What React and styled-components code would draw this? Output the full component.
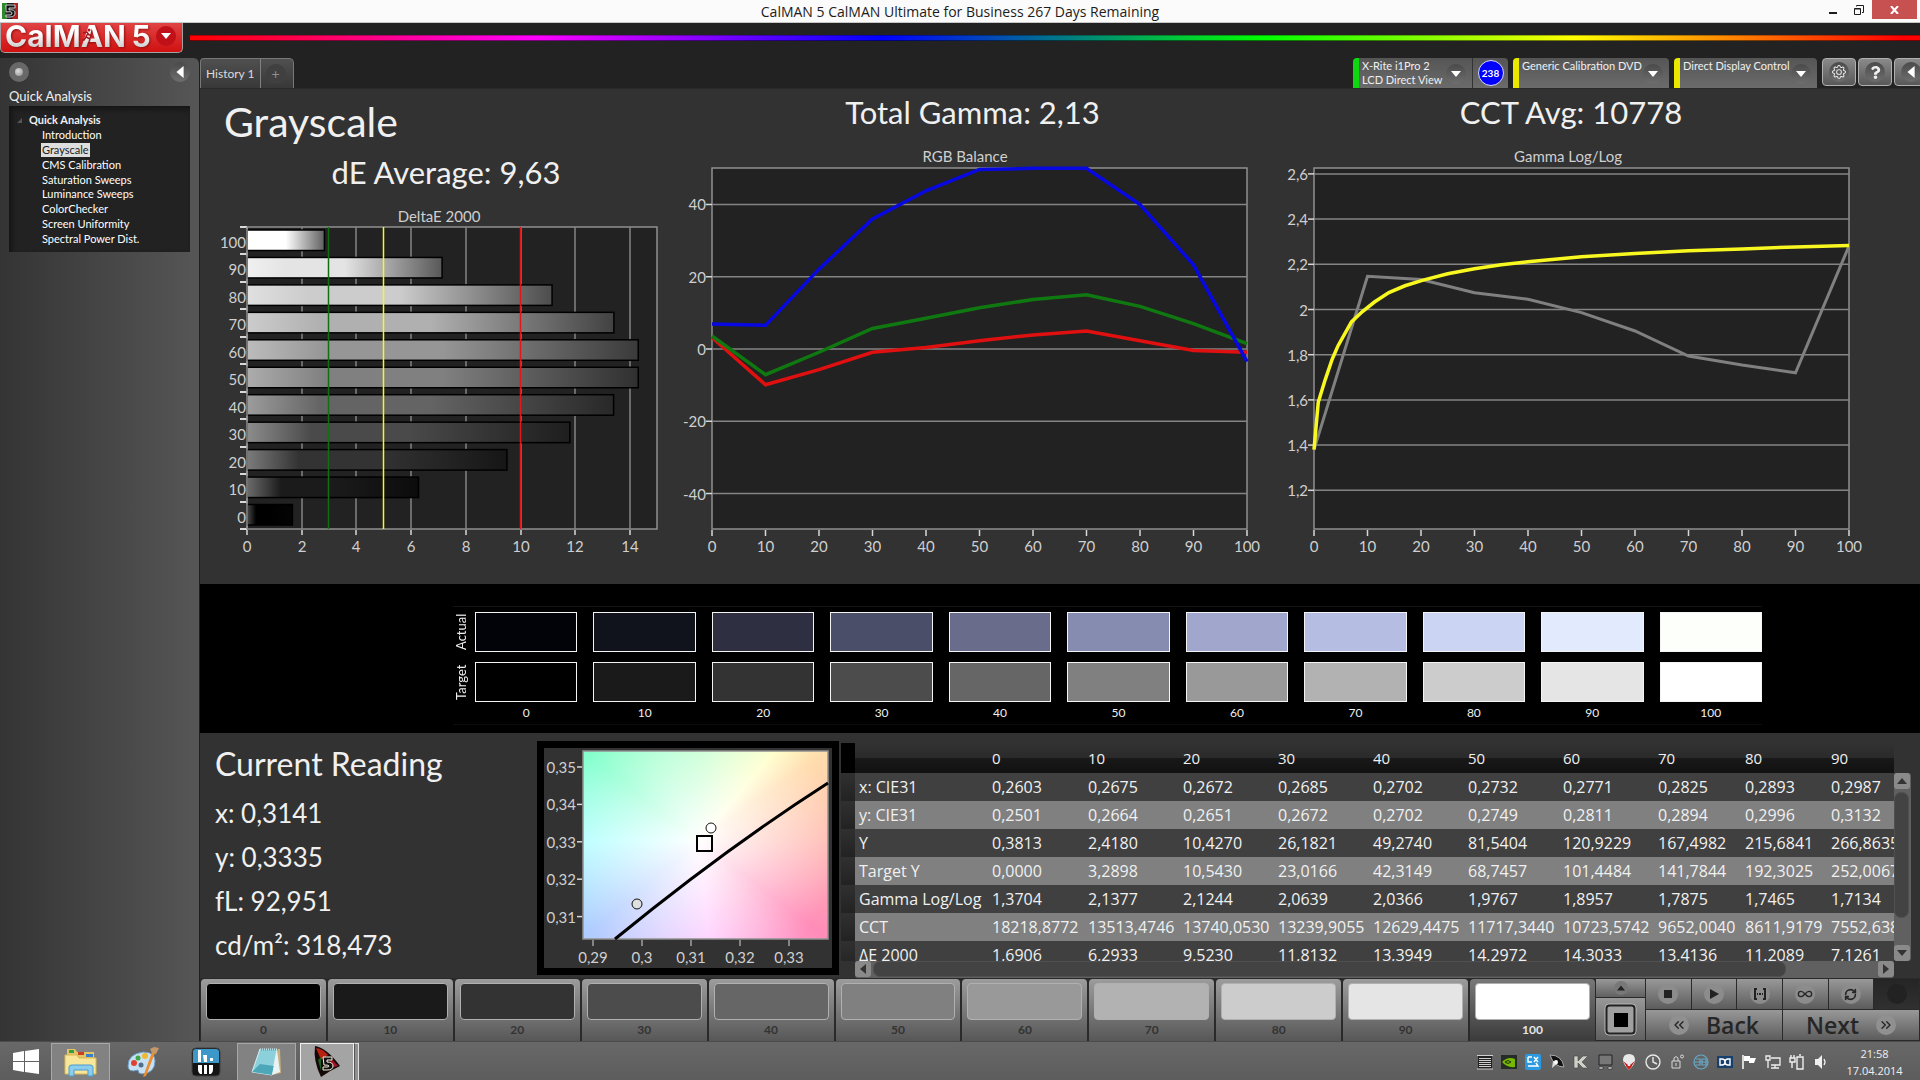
import styled, { createGlobalStyle } from "styled-components";
import { BsGear } from "react-icons/bs";
import { FaQuestion } from "react-icons/fa";
import { ChevronsLeft, ChevronsRight, Infinity as Loop, RefreshCw } from "lucide-react";

const GlobalStyle = createGlobalStyle`
  * {
    box-sizing: border-box;
  }
  body {
    margin: 0;
    background: #222222;
    color: #f0f0f0;
    font-family: Lato, "Liberation Sans", sans-serif;
    font-size: 12px;
  }
  button {
    font: inherit;
    color: inherit;
    border: 0;
    padding: 0;
    background: none;
    cursor: pointer;
  }
  h1, h2, p, ul {
    margin: 0;
    padding: 0;
    font-weight: 400;
  }
  svg {
    display: block;
    flex-shrink: 0;
  }
`;

const Page = styled.div`
  min-height: 100vh;
  display: flex;
  flex-direction: column;
  overflow: hidden;
`;

const TitleBar = styled.header`
  display: grid;
  grid-template-columns: 1fr auto 1fr;
  height: 23px;
  background: #fbfbfb;
  border-bottom: 1px solid #c8c8c8;
  color: #1c1c1c;
  font-family: "Open Sans", sans-serif;
  font-size: 14px;
  line-height: 23px;

  .icon {
    padding: 3px 2px;
  }
`;

const WindowButtons = styled.div`
  display: flex;
  justify-content: flex-end;
  padding-right: 3px;

  button {
    width: 26px;
    height: 19px;
    display: grid;
    place-items: center;
  }
  .close {
    width: 45px;
    background: #c75050;
  }
`;

const Brand = styled.div`
  display: flex;
  height: 35px;

  .rainbow {
    flex: 1;
    height: 6px;
    margin: 12px 0 0 7px;
    background: linear-gradient(
      90deg,
      #ff0000,
      #ff00ff 20%,
      #0000ff 40%,
      #00ff00 62%,
      #ffff00 80%,
      #ff0000 99%
    );
    border-top: 1px solid rgba(0, 0, 0, 0.3);
    border-bottom: 1px solid rgba(0, 0, 0, 0.5);
  }
`;

const Logo = styled.button`
  position: relative;
  display: flex;
  justify-content: space-between;
  align-items: center;
  width: 183px;
  height: 30px;
  padding: 0 6px 4px 4px;
  background: linear-gradient(#e04444, #d01010);
  border: 1px solid #a8a0a0;
  border-top: 0;
  border-radius: 0 0 5px 5px;

  b {
    font-family: Inter, sans-serif;
    font-size: 30px;
    line-height: 26px;
    font-weight: 700;
    background: linear-gradient(#ffffff 40%, #c8c8c8);
    background-clip: text;
    color: transparent;
    filter: drop-shadow(1px 1px 1px #901010);
  }
  .runner {
    position: absolute;
    left: 80px;
    top: 5px;
  }
`;

const Round = styled.span`
  display: grid;
  place-items: center;
  flex-shrink: 0;
  width: ${(props) => props.$size || 20}px;
  height: ${(props) => props.$size || 20}px;
  border-radius: 50%;
  background: ${(props) => props.$fill || "linear-gradient(#4a4a4a, #6e6e6e)"};
`;

const Body = styled.div`
  flex: 1;
  display: flex;
`;

const Sidebar = styled.aside`
  width: 200px;
  padding: 4px 9px;
  background: linear-gradient(90deg, #343434, #565656);
  border-right: 1px solid #202020;
  border-radius: 0 6px 0 0;

  .top {
    display: flex;
    justify-content: space-between;
    align-items: center;
  }
  .heading {
    font-size: 13px;
    line-height: 20px;
    margin-top: 4px;
  }
`;

const Tree = styled.nav`
  height: 146px;
  padding: 6px 0 6px 20px;
  background: #222222;
  box-shadow: inset 3px 3px 5px #151515;
  position: relative;
  font-size: 11px;

  .arrow {
    position: absolute;
    left: 8px;
    top: 12px;
  }
  b {
    display: block;
    line-height: 16px;
  }
  ul {
    list-style: none;
    height: 118px;
    padding-left: 12px;
    display: flex;
    flex-direction: column;
    justify-content: space-between;
    line-height: 14px;
  }
`;

const TreeLink = styled.a`
  display: inline-block;
  padding: 0 1px;
  text-decoration: none;
  color: ${(props) => (props.$active ? "#222222" : "#ffffff")};
  background: ${(props) => (props.$active ? "#dedede" : "none")};
`;

const Main = styled.main`
  flex: 1;
  min-width: 0;
  display: flex;
  flex-direction: column;
`;

const TabBar = styled.div`
  display: flex;
  justify-content: space-between;
  height: 30px;
`;

const Tabs = styled.div`
  display: flex;
  background: linear-gradient(#505050, #383838);
  border: 1px solid #787878;
  border-bottom: 0;
  border-radius: 4px 5px 0 0;

  button {
    padding: 0 5px;
    color: #dcdcdc;
  }
  button + button {
    width: 33px;
    padding: 0 5px;
    border-left: 1px solid #808080;
    font-size: 14px;
    color: #909090;
  }
`;

const Devices = styled.div`
  display: flex;
  margin-right: -10px;
`;

const Device = styled.div`
  display: flex;
  width: ${(props) => props.$width}px;
  margin-right: 5px;
  background: linear-gradient(#555555, #6b6b6b);
  border-left: 6px solid ${(props) => props.$mark};
  border-radius: 4px 4px 0 0;

  .pick {
    flex: 1;
    display: flex;
    justify-content: space-between;
    padding: 1px 6px 0 3px;
    text-align: left;
    font-size: 11px;
    line-height: 14px;
    white-space: nowrap;
  }
  .pick span:last-child {
    margin-top: 5px;
  }
  .count {
    width: 36px;
    display: grid;
    place-items: center;
    border-left: 1px solid #333333;
  }
  .count span {
    border: 1px solid #d8d8ff;
    font-size: 10px;
    font-weight: 700;
    color: #ffffff;
  }
`;

const SquareButton = styled.button`
  width: 34px;
  height: 28px;
  margin-right: 2px;
  display: grid;
  place-items: center;
  background: linear-gradient(#8a8a8a, #585858);
  border: 1px solid #b0b0b0;
  border-radius: 4px;
`;

const Charts = styled.section`
  display: grid;
  grid-template-columns: 448fr 589fr 592fr;
  column-gap: 8px;
  padding: 3px 60px 19px 15px;
  background: #323232;
  border-top: 1px solid #2a2a2a;

  h1 {
    font-size: 41px;
    line-height: 60px;
    padding-left: 9px;
  }
  h2 {
    font-size: 31px;
    line-height: 40px;
    padding: 0 0 4px 14px;
    text-align: center;
  }
  svg {
    width: 100%;
    overflow: visible;
  }
`;

const AxisText = styled.text`
  fill: #cfcfcf;
  font-size: 15px;
  text-anchor: ${(props) => props.$anchor || "middle"};
`;

const Swatches = styled.section`
  padding: 22px 158px 8px 253px;
  background: #000000;

  .rows {
    display: grid;
    grid-template-columns: 6px repeat(11, 1fr);
    column-gap: 16px;
    row-gap: 10px;
    padding-top: 5px;
    border-top: 1px solid #141414;
    border-bottom: 1px solid #0c0c0c;
  }
  .side {
    writing-mode: vertical-rl;
    transform: rotate(180deg);
    width: 16px;
    text-align: center;
    font-size: 13px;
    line-height: 16px;
  }
  .level {
    margin-top: -8px;
    text-align: center;
    line-height: 18px;
    padding-bottom: 2px;
  }
`;

const Chip = styled.div`
  height: 40px;
  border: 1px solid #f4f4f4;
  background: ${(props) => props.$color};
`;

const Bottom = styled.section`
  flex: 1;
  display: flex;
  background: #323232;
  padding-top: 8px;
`;

const Reading = styled.div`
  width: 337px;
  padding-left: 15px;

  h2 {
    font-size: 32px;
    line-height: 46px;
    padding-bottom: 4px;
  }
  p {
    font-size: 26px;
    line-height: 44px;
  }
`;

const Cie = styled.div`
  width: 302px;
  height: 234px;
  border: 7px solid #000000;
`;

const CieField = styled.div`
  width: 245px;
  height: 188px;
  background: radial-gradient(
      circle at 116px 90px,
      #ffffff,
      rgba(255, 255, 255, 0) 140px
    ),
    conic-gradient(
      from 0deg at 116px 90px,
      #b4ffc4 0deg,
      #ffffc4 40deg,
      #ffdcac 55deg,
      #ffbcb4 90deg,
      #ff8cb8 127deg,
      #ffc4ff 174deg,
      #b0ccff 230deg,
      #b0ffff 270deg,
      #84ffcc 308deg,
      #b4ffc4 360deg
    );
`;

const Grid = styled.div`
  flex: 1;
  min-width: 0;
  display: grid;
  grid-template-columns: minmax(0, 1fr) 17px;
  grid-template-rows: 218px 17px;
  margin: 2px 9px 0 2px;
`;

const Clip = styled.div`
  overflow: hidden;
`;

const Table = styled.table`
  table-layout: fixed;
  width: 1100px;
  border-collapse: collapse;
  font-family: "Open Sans", sans-serif;
  font-size: 16px;
  white-space: nowrap;

  th, td {
    height: 28px;
    padding: 0 4px;
    font-weight: 400;
    text-align: left;
    line-height: 24px;
  }
  thead th {
    height: 30px;
    font-size: 15px;
    background: linear-gradient(#323232, #2a2a2a 50%, #191919 50%, #111111);
  }
  thead th:first-child {
    background: #000000;
  }
  tbody tr {
    background: #404040;
  }
  tbody tr:nth-child(even) {
    background: #808080;
  }
  tbody .gutter {
    background: linear-gradient(#303030, #222222);
  }
`;

const ScrollBar = styled.div`
  display: flex;
  flex-direction: ${(props) => (props.$vertical ? "column" : "row")};
  justify-content: space-between;
  margin: ${(props) => (props.$vertical ? "30px 0 0" : "0 0 0 14px")};
  background: #606060;
  border-radius: 3px;

  button {
    width: 16px;
    height: 16px;
    display: grid;
    place-items: center;
    background: #8a8a8a;
    border-radius: 3px;
  }
  .track {
    flex: 1;
    margin: ${(props) => (props.$vertical ? "3px 0" : "0 2px")};
  }
  .thumb {
    width: ${(props) => (props.$vertical ? "15px" : "91%")};
    height: ${(props) => (props.$vertical ? "84%" : "16px")};
    background: #434343;
    border: 1px solid #505050;
    border-radius: 7px;
  }
`;

const Controls = styled.section`
  display: flex;
  gap: 1px;
  height: 63px;
  padding: 1px;
  background: #2a2a2a;
`;

const Patches = styled.div`
  flex: 1;
  display: grid;
  grid-template-columns: repeat(11, 1fr);
  gap: 2px;
`;

const Patch = styled.button`
  padding: 4px 5px;
  border-radius: 4px;
  background: ${(props) =>
    props.$active
      ? "linear-gradient(#787878, #383838)"
      : "linear-gradient(#9c9c9c, #545454)"};
  color: ${(props) => (props.$active ? "#e4e4e4" : "#333333")};
  font-weight: 700;

  i {
    display: block;
    height: 37px;
    border: 1px solid #b0b0b0;
    border-radius: 4px;
    background: ${(props) => props.$color};
  }
  span {
    display: block;
    line-height: 20px;
  }
`;

const Stack = styled.div`
  display: grid;
  grid-template-rows: 18px 1fr;
  row-gap: 1px;
  width: 49px;

  button {
    display: grid;
    place-items: center;
    background: linear-gradient(#989898, #606060);
  }
`;

const Transport = styled.div`
  width: 273px;
  display: grid;
  grid-template-rows: 30px 1fr;
  gap: 1px;
  color: #262626;

  .icons {
    display: grid;
    grid-template-columns: repeat(6, 1fr);
    gap: 1px;
  }
  .steps {
    display: grid;
    grid-template-columns: 1fr 1fr;
    gap: 1px;
  }
  button {
    display: flex;
    align-items: center;
    justify-content: center;
    gap: 17px;
    background: linear-gradient(#989898, #5c5c5c);
  }
  .steps button {
    font-family: "Open Sans", sans-serif;
    font-size: 23px;
    font-weight: 600;
    line-height: 28px;
  }
  .icons button:last-child {
    background: linear-gradient(#252525, #303030);
  }
`;

const TaskBar = styled.footer`
  display: flex;
  align-items: center;
  height: 40px;
  background: linear-gradient(#686868, #5c5c5c);
  border-top: 1px solid #4c4c4c;
`;

const TaskButton = styled.button`
  width: ${(props) => props.$width}px;
  height: 38px;
  display: grid;
  place-items: center;
  border: ${(props) => (props.$open ? "1px solid #a8a8a8" : "0")};
  background: ${(props) => (props.$open ? "#828282" : "none")};
  ${(props) =>
    props.$active &&
    "background: #a4a4a4; border: 1px solid #f0f0f0; margin-left: 4px;"}
`;

const Sliver = styled.div`
  width: 5px;
  height: 38px;
  background: #909090;
  border: 1px solid #e0e0e0;
  border-left-color: #555555;
`;

const Tray = styled.div`
  display: flex;
  gap: 8px;
  margin-left: auto;
`;

const Clock = styled.div`
  width: 91px;
  font-family: "Open Sans", sans-serif;
  font-size: 11px;
  line-height: 17px;
  text-align: center;
`;

const levels = [0, 10, 20, 30, 40, 50, 60, 70, 80, 90, 100];

const pages = [
  "Introduction",
  "Grayscale",
  "CMS Calibration",
  "Saturation Sweeps",
  "Luminance Sweeps",
  "ColorChecker",
  "Screen Uniformity",
  "Spectral Power Dist.",
];

const bars = [
  { level: 100, value: 2.83, from: "#ffffff", mid: "#ffffff", to: "#606060" },
  { level: 90, value: 7.13, from: "#f0f0f0", mid: "#e4e4e4", to: "#585858" },
  { level: 80, value: 11.15, from: "#e0e0e0", mid: "#cccccc", to: "#4c4c4c" },
  { level: 70, value: 13.41, from: "#cccccc", mid: "#b0b0b0", to: "#424242" },
  { level: 60, value: 14.3, from: "#bcbcbc", mid: "#969696", to: "#3a3a3a" },
  { level: 50, value: 14.3, from: "#acacac", mid: "#808080", to: "#303030" },
  { level: 40, value: 13.4, from: "#9c9c9c", mid: "#646464", to: "#282828" },
  { level: 30, value: 11.8, from: "#8c8c8c", mid: "#4a4a4a", to: "#1e1e1e" },
  { level: 20, value: 9.5, from: "#7c7c7c", mid: "#333333", to: "#161616" },
  { level: 10, value: 6.27, from: "#6c6c6c", mid: "#1b1b1b", to: "#0c0c0c" },
  { level: 0, value: 1.66, from: "#4c4c4c", mid: "#000000", to: "#040404" },
];

const balance = [
  { color: "#e01010", values: [3.2, -9.9, -5.7, -0.9, 0.4, 2.3, 3.9, 5, 2.3, -0.4, -0.9] },
  { color: "#107810", values: [3.6, -7.1, -0.9, 5.7, 8.5, 11.4, 13.7, 15, 11.8, 7, 1.5] },
  { color: "#0808e0", values: [6.9, 6.55, 22.1, 36, 43.8, 49.7, 50, 50, 40, 23.3, -3.5] },
];

const gamma = [1.38, 2.147, 2.133, 2.074, 2.045, 1.986, 1.905, 1.794, 1.754, 1.72, 2.281];

const targetGamma = [
  [0, 1.38], [0.8, 1.59], [2.1, 1.69], [3.4, 1.78], [4.5, 1.84], [7, 1.945],
  [9, 1.99], [11.3, 2.033], [14, 2.075], [17, 2.105], [20.4, 2.13], [25, 2.158],
  [30, 2.18], [35, 2.198], [40, 2.211], [50, 2.233], [60, 2.248], [70, 2.26],
  [80, 2.268], [90, 2.277], [100, 2.283],
];

const swatches = [
  { name: "Actual", colors: ["#020308", "#10131c", "#2e3042", "#4b4e68", "#6a6c8c", "#868caf", "#a0a6cc", "#b6bde2", "#ccd4f4", "#e2eafd", "#fdfffa"] },
  { name: "Target", colors: ["#000000", "#1a1a1a", "#333333", "#4c4c4c", "#666666", "#808080", "#999999", "#b2b2b2", "#cccccc", "#e5e5e5", "#ffffff"] },
];

const results = [
  ["x: CIE31", "0,2603", "0,2675", "0,2672", "0,2685", "0,2702", "0,2732", "0,2771", "0,2825", "0,2893", "0,2987"],
  ["y: CIE31", "0,2501", "0,2664", "0,2651", "0,2672", "0,2702", "0,2749", "0,2811", "0,2894", "0,2996", "0,3132"],
  ["Y", "0,3813", "2,4180", "10,4270", "26,1821", "49,2740", "81,5404", "120,9229", "167,4982", "215,6841", "266,8635"],
  ["Target Y", "0,0000", "3,2898", "10,5430", "23,0166", "42,3149", "68,7457", "101,4484", "141,7844", "192,3025", "252,0067"],
  ["Gamma Log/Log", "1,3704", "2,1377", "2,1244", "2,0639", "2,0366", "1,9767", "1,8957", "1,7875", "1,7465", "1,7134"],
  ["CCT", "18218,8772", "13513,4746", "13740,0530", "13239,9055", "12629,4475", "11717,3440", "10723,5742", "9652,0040", "8611,9179", "7552,6385"],
  ["ΔE 2000", "1,6906", "6,2933", "9,5230", "11,8132", "13,3949", "14,2972", "14,3033", "13,4136", "11,2089", "7,1261"],
];

const columnWidths = [14, 133, 96, 95, 95, 95, 95, 95, 95, 87, 86, 114];

const Caret = ({ dir = "down", size = 8, color = "#ffffff" }) => {
  const turn = { down: 0, left: 90, up: 180, right: 270 }[dir];
  return (
    <svg width={size} height={size} viewBox="0 0 10 10">
      <path d="M0 2h10L5 8z" fill={color} transform={`rotate(${turn} 5 5)`} />
    </svg>
  );
};

const DeltaEChart = () => (
  <svg viewBox="0 0 448 369" role="img" aria-label="DeltaE 2000">
    <defs>
      {bars.map((bar) => (
        <linearGradient id={`bar${bar.level}`} key={bar.level}>
          <stop offset="0" stopColor={bar.from} />
          <stop offset="0.2" stopColor={bar.mid} />
          <stop offset="0.5" stopColor={bar.mid} />
          <stop offset="1" stopColor={bar.to} />
        </linearGradient>
      ))}
    </defs>
    <AxisText x="224" y="26">DeltaE 2000</AxisText>
    <rect x="32" y="31" width="410" height="302" fill="#222222" stroke="#909090" strokeWidth="1.5" />
    {[0, 2, 4, 6, 8, 10, 12, 14].map((v) => {
      const x = Math.round(32 + v * 27.36);
      return (
        <g key={v}>
          <path d={`M${x} 31V333`} stroke="#848484" strokeWidth="1.5" />
          <path d={`M${x} 334V339`} stroke="#d8d8d8" strokeWidth="1.5" />
          <AxisText x={x} y="356">{v}</AxisText>
        </g>
      );
    })}
    {bars.map((bar, idx) => {
      const y = 31 + idx * 27.45;
      return (
        <g key={bar.level}>
          <path d={`M25 ${Math.round(y)}H32`} stroke="#d8d8d8" strokeWidth="2" />
          <rect
            x="32"
            y={y + 3}
            width={bar.value * 27.36}
            height="20.5"
            fill={`url(#bar${bar.level})`}
            stroke="#000000"
            strokeWidth="1.5"
          />
          <AxisText x="31" y={y + 21} $anchor="end">{bar.level}</AxisText>
        </g>
      );
    })}
    <path d="M25 333H32" stroke="#d8d8d8" strokeWidth="2" />
    <path d="M32 31V333" stroke="#909090" strokeWidth="1.5" />
    <path d="M113.5 31V333" stroke="#107010" strokeWidth="1.5" />
    <path d="M168.5 31V333" stroke="#f8f820" strokeWidth="1.5" />
    <path d="M305.5 31V333" stroke="#e01818" strokeWidth="1.5" />
  </svg>
);

const LineChart = ({ width, left, title, titleX, ticks, scaleY, format, children }) => (
  <svg viewBox={`0 0 ${width} 429`} role="img" aria-label={title}>
    <AxisText x={titleX} y="26">{title}</AxisText>
    <rect x={left} y="32" width="535" height="361" fill="#222222" stroke="#909090" strokeWidth="1.5" />
    {ticks.map((v) => (
      <g key={v}>
        <path d={`M${left} ${scaleY(v)}H${left + 535}`} stroke="#848484" strokeWidth="1.5" />
        <path d={`M${left - 6} ${scaleY(v)}H${left}`} stroke="#d8d8d8" strokeWidth="1.5" />
        <AxisText x={left - 6} y={scaleY(v) + 6} $anchor="end">{format(v)}</AxisText>
      </g>
    ))}
    {levels.map((v) => (
      <g key={v}>
        <path d={`M${left + v * 5.35} 394V400`} stroke="#d8d8d8" strokeWidth="1.5" />
        <AxisText x={left + v * 5.35} y="416">{v}</AxisText>
      </g>
    ))}
    {children}
  </svg>
);

const balanceY = (v) => 213 - v * 3.613;
const gammaY = (v) => 173.5 - (v - 2) * 226;
const line = (points, left, scaleY) =>
  points.map(([x, y]) => `${left + x * 5.35},${scaleY(y)}`).join(" ");
const byLevel = (values) => values.map((v, idx) => [idx * 10, v]);

const CieChart = () => (
  <svg width="100%" height="220" viewBox="0 0 288 220" role="img" aria-label="CIE chart">
    <foreignObject x="39" y="3" width="245" height="188">
      <CieField />
    </foreignObject>
    <rect x="39" y="3" width="245" height="188" fill="none" stroke="#909090" strokeWidth="1.5" />
    {["0,35", "0,34", "0,33", "0,32", "0,31"].map((label, idx) => (
      <g key={label}>
        <path d={`M33 ${19 + idx * 37.4}H38`} stroke="#d8d8d8" strokeWidth="1.5" />
        <AxisText x="32" y={25 + idx * 37.4} $anchor="end">{label}</AxisText>
      </g>
    ))}
    {["0,29", "0,3", "0,31", "0,32", "0,33"].map((label, idx) => (
      <g key={label}>
        <path d={`M${49 + idx * 49} 192V198`} stroke="#d8d8d8" />
        <AxisText x={49 + idx * 49} y="215">{label}</AxisText>
      </g>
    ))}
    <path d="M71 191Q181 101 284 35" fill="none" stroke="#000000" strokeWidth="3" />
    <rect x="153" y="88" width="15" height="15" fill="none" stroke="#000000" strokeWidth="2" />
    <circle cx="167" cy="80" r="5" fill="#ffffff" stroke="#111111" />
    <circle cx="93" cy="156" r="5" fill="#e0e0e0" stroke="#111111" />
  </svg>
);

const AppGlyph = ({ size }) => (
  <svg width={size} height={size} viewBox="0 0 16 16">
    <rect width="16" height="16" fill="#222222" />
    <path d="M0 0h5L3 8l2 8H0z" fill="#2c8a2c" />
    <path d="M12 0h4v16h-6l3-7z" fill="#b02020" />
    <path d="M4 2h9v3H7v2q6-1 6 3t-5 4H4v-2h4q2 0 2-2T4 9z" fill="#111111" stroke="#f4f4f4" strokeWidth=".8" />
  </svg>
);

const trayIcons = [
  <g key="0"><path d="M1 1h14v14H1z" fill="#222222" /><path d="M0 1.5h16M2 4.5h12M2 6.5h12M2 8.5h12M2 10.5h12M2 12.500h12M0 15h16" stroke="#d0d0d0" /></g>,
  <g key="1"><path d="M0 1h16v14H0z" fill="#252b25" /><path d="M1 8q6-6 13-3v8q-8 1-13-5z" fill="#76b900" /><path d="M4 8q3-3 6 0-3 3-6 0z" fill="none" stroke="#203000" /></g>,
  <g key="2"><rect width="16" height="16" rx="2" fill="#2c9ae0" /><path d="M3 3h4M3 3v5h4M9 3l4 5M13 3l-4 5M3 12h10l-2-3" fill="none" stroke="#ffffff" strokeWidth="1.4" /></g>,
  <g key="3"><path d="M1 1q12 0 14 12-10 0-14-12z" fill="#111111" stroke="#aaaaaa" /><path d="M4 7l-1 7 6-5z" fill="#dddddd" /><circle cx="7" cy="8" r="2" fill="#ffffff" /></g>,
  <g key="4"><path d="M1 2h4v5l5-5h5L9 8l6 6h-5L5 9v5H1z" fill="#d0d0c8" stroke="#444444" strokeWidth=".6" /></g>,
  <g key="5"><path d="M2 1h13v10H2z" fill="#777777" stroke="#222222" /><path d="M2 13h4v2H2zM11 13h4v2h-4z" fill="#e0e0e0" stroke="#222222" strokeWidth=".6" /></g>,
  <g key="6"><path d="M2 6q0-6 6-6t6 6q0 4-6 10-6-6-6-10z" fill="#e8e8e8" /><path d="M2 7l5 4-1 2zM14 7l-5 4 1 2z" fill="#c01010" /><path d="M5 12h6l-3 4z" fill="#d02020" /></g>,
  <g key="7" fill="none" stroke="#e8e8e8" strokeWidth="1.4"><circle cx="8" cy="8" r="7" /><path d="M8 3v5l4 2" /></g>,
  <g key="8" fill="none" stroke="#d8d8d8"><path d="M3 7h8v7H3zM5 7V4q2-3 4 0v3M7 9v3" /><circle cx="13" cy="2.500" r="1.500" /></g>,
  <g key="9" fill="none" stroke="#68a8c8" strokeWidth="1.2"><circle cx="8" cy="8" r="7" /><path d="M3 5h4v6H3M9 5h4v6H9zM1 8h14" /></g>,
  <g key="10"><path d="M0 2h16v12H0z" fill="#18406c" /><path d="M3 5h2q3 0 3 3t-3 3H3zM13 5h-2q-3 0-3 3t3 3h2z" fill="none" stroke="#ffffff" strokeWidth="1.4" /></g>,
  <g key="11"><path d="M2 1v14" stroke="#ffffff" strokeWidth="1.5" /><path d="M3 2h6v2h6l-2 5H8V7H3z" fill="#ffffff" /></g>,
  <g key="12" fill="none" stroke="#f0f0f0" strokeWidth="1.3"><path d="M6 4h9v7H6M10 11v3M6 14h8M1 2h4v4H1zM3 6v8" /></g>,
  <g key="13" fill="none" stroke="#f0f0f0" strokeWidth="1.4"><path d="M8 3h6v12H8zM10 1h2M1 4h5v4H1zM2 1v3M5 1v3M3 8v6" /></g>,
  <g key="14"><path d="M2 5h3l4-4v14l-4-4H2z" fill="#f0f0f0" /><path d="M11 5q2 3 0 6" fill="none" stroke="#f0f0f0" strokeWidth="1.3" /></g>,
];

const App = () => (
  <>
    <GlobalStyle />
    <Page>
      <TitleBar>
        <span className="icon"><AppGlyph size={16} /></span>
        <span>CalMAN 5 CalMAN Ultimate for Business 267 Days Remaining</span>
        <WindowButtons>
          <button aria-label="Minimize">
            <svg width="10" height="10"><path d="M1 7h8v2H1z" fill="#1c1c1c" /></svg>
          </button>
          <button aria-label="Restore">
            <svg width="10" height="10" fill="none" stroke="#1c1c1c">
              <path d="M.5 3.500h6v6h-6zM2.500 1.500V.5h7v7H8" />
              <path d="M.5 4h6" />
            </svg>
          </button>
          <button className="close" aria-label="Close">
            <svg width="9" height="8"><path d="M1 0l7 8M8 0L1 8" stroke="#ffffff" strokeWidth="2" /></svg>
          </button>
        </WindowButtons>
      </TitleBar>
      <Brand>
        <Logo>
          <b>CalMAN</b>
          <b>5</b>
          <Round $fill="#c01018"><Caret size={10} /></Round>
          <svg className="runner" width="12" height="15" fill="none" stroke="#a81820" strokeWidth="1.5">
            <circle cx="8" cy="2" r="1.500" fill="#a81820" stroke="none" />
            <path d="M2 5l4-1 2 3 3 0M7 5L5 9l4 2-1 3M5 9l-2 3H1" />
          </svg>
        </Logo>
        <div className="rainbow" />
      </Brand>
      <Body>
        <Sidebar>
          <div className="top">
            <button aria-label="Record">
              <Round $fill="#686868">
                <Round $size={8} $fill="radial-gradient(circle at 3px 3px, #dddddd, #888888)" />
              </Round>
            </button>
            <button aria-label="Collapse"><Round><Caret dir="left" size={12} /></Round></button>
          </div>
          <p className="heading">Quick Analysis</p>
          <Tree>
            <svg className="arrow" width="6" height="6"><path d="M5 0v5H0z" fill="#555555" /></svg>
            <b>Quick Analysis</b>
            <ul>
              {pages.map((page) => (
                <li key={page}>
                  <TreeLink href="#" $active={page === "Grayscale"}>{page}</TreeLink>
                </li>
              ))}
            </ul>
          </Tree>
        </Sidebar>
        <Main>
          <TabBar>
            <Tabs>
              <button>History 1</button>
              <button aria-label="Add history"><Round $fill="#404040">+</Round></button>
            </Tabs>
            <Devices>
              <Device $width={155} $mark="#10d810">
                <button className="pick">
                  <span>X-Rite i1Pro 2<br />LCD Direct View</span>
                  <Round><Caret size={10} /></Round>
                </button>
                <div className="count"><Round $size={26} $fill="#0000ff">238</Round></div>
              </Device>
              <Device $width={156} $mark="#e8e800">
                <button className="pick">
                  <span>Generic Calibration DVD</span>
                  <Round><Caret size={10} /></Round>
                </button>
              </Device>
              <Device $width={143} $mark="#e8e800">
                <button className="pick">
                  <span>Direct Display Control</span>
                  <Round><Caret size={10} /></Round>
                </button>
              </Device>
              <SquareButton aria-label="Settings"><Round><BsGear size={14} /></Round></SquareButton>
              <SquareButton aria-label="Help"><Round><FaQuestion size={13} /></Round></SquareButton>
              <SquareButton aria-label="Collapse"><Round><Caret dir="left" size={12} /></Round></SquareButton>
            </Devices>
          </TabBar>
          <Charts>
            <div>
              <h1>Grayscale</h1>
              <h2>dE Average: 9,63</h2>
              <DeltaEChart />
            </div>
            <div>
              <h2>Total Gamma: 2,13</h2>
              <LineChart
                width={589}
                left={41}
                title="RGB Balance"
                titleX={294}
                ticks={[40, 20, 0, -20, -40]}
                scaleY={balanceY}
                format={(v) => v}
              >
                {balance.map((item) => (
                  <polyline
                    key={item.color}
                    points={line(byLevel(item.values), 41, balanceY)}
                    fill="none"
                    stroke={item.color}
                    strokeWidth="3.5"
                  />
                ))}
              </LineChart>
            </div>
            <div>
              <h2>CCT Avg: 10778</h2>
              <LineChart
                width={592}
                left={46}
                title="Gamma Log/Log"
                titleX={300}
                ticks={[2.6, 2.4, 2.2, 2, 1.8, 1.6, 1.4, 1.2]}
                scaleY={gammaY}
                format={(v) => String(v).replace(".", ",")}
              >
                <polyline
                  points={line(byLevel(gamma), 46, gammaY)}
                  fill="none"
                  stroke="#808080"
                  strokeWidth="3"
                />
                <polyline
                  points={line(targetGamma, 46, gammaY)}
                  fill="none"
                  stroke="#f8f820"
                  strokeWidth="3.5"
                />
              </LineChart>
            </div>
          </Charts>
          <Swatches>
            <div className="rows">
              {swatches.map((row) => [
                <span className="side" key={row.name}>{row.name}</span>,
                ...row.colors.map((color) => <Chip key={color} $color={color} />),
              ])}
              <span />
              {levels.map((level) => (
                <span className="level" key={level}>{level}</span>
              ))}
            </div>
          </Swatches>
          <Bottom>
            <Reading>
              <h2>Current Reading</h2>
              <p>x: 0,3141</p>
              <p>y: 0,3335</p>
              <p>fL: 92,951</p>
              <p>cd/m²: 318,473</p>
            </Reading>
            <Cie><CieChart /></Cie>
            <Grid>
              <Clip>
                <Table>
                  <colgroup>
                    {columnWidths.map((width, idx) => (
                      <col key={idx} width={width} />
                    ))}
                  </colgroup>
                  <thead>
                    <tr>
                      <th />
                      <th />
                      {levels.slice(0, 10).map((level) => (
                        <th key={level} scope="col">{level}</th>
                      ))}
                    </tr>
                  </thead>
                  <tbody>
                    {results.map(([name, ...values]) => (
                      <tr key={name}>
                        <td className="gutter" />
                        <th scope="row">{name}</th>
                        {values.map((value, idx) => (
                          <td key={idx}>{value}</td>
                        ))}
                      </tr>
                    ))}
                  </tbody>
                </Table>
              </Clip>
              <ScrollBar $vertical>
                <button aria-label="Scroll up"><Caret dir="up" size={10} color="#333333" /></button>
                <div className="track"><div className="thumb" /></div>
                <button aria-label="Scroll down"><Caret size={10} color="#333333" /></button>
              </ScrollBar>
              <ScrollBar>
                <button aria-label="Scroll left"><Caret dir="left" size={10} color="#333333" /></button>
                <div className="track"><div className="thumb" /></div>
                <button aria-label="Scroll right"><Caret dir="right" size={10} color="#333333" /></button>
              </ScrollBar>
            </Grid>
          </Bottom>
          <Controls>
            <Patches>
              {levels.map((level, idx) => (
                <Patch key={level} $color={swatches[1].colors[idx]} $active={level === 100}>
                  <i />
                  <span>{level}</span>
                </Patch>
              ))}
            </Patches>
            <Stack>
              <button aria-label="Expand"><Round $size={14} $fill="#787878"><Caret dir="up" color="#222222" /></Round></button>
              <button aria-label="Pattern window">
                <svg width="33" height="33">
                  <rect x="1" y="1" width="31" height="31" rx="4" fill="#a0a0a0" stroke="#b8b8b8" />
                  <rect x="2.500" y="2.500" width="28" height="28" rx="3" fill="#a0a0a0" stroke="#222222" strokeWidth="2" />
                  <path d="M10 10h14v14H10z" fill="#000000" />
                </svg>
              </button>
            </Stack>
            <Transport>
              <div className="icons">
                <button aria-label="Stop">
                  <Round $fill="#8c8c8c"><svg width="8" height="8"><path d="M0 0h8v8H0z" fill="#222222" /></svg></Round>
                </button>
                <button aria-label="Play">
                  <Round $fill="#8c8c8c"><svg width="10" height="10"><path d="M1 0l9 5-9 5z" fill="#222222" /></svg></Round>
                </button>
                <button aria-label="Read series">
                  <Round $fill="#8c8c8c">
                    <svg width="14" height="12" fill="none" stroke="#222222" strokeWidth="2">
                      <path d="M4 1H2v10h2M10 1h2v10h-2M4 6h1M6 6h2M9 6h1" />
                    </svg>
                  </Round>
                </button>
                <button aria-label="Continuous"><Round $fill="#8c8c8c"><Loop size={16} /></Round></button>
                <button aria-label="Refresh"><Round $fill="#8c8c8c"><RefreshCw size={13} strokeWidth={3} /></Round></button>
                <button aria-label="Status"><Round $fill="#222222" /></button>
              </div>
              <div className="steps">
                <button><Round $fill="#909090"><ChevronsLeft size={16} /></Round>Back</button>
                <button>Next<Round $fill="#909090"><ChevronsRight size={16} /></Round></button>
              </div>
            </Transport>
          </Controls>
        </Main>
      </Body>
      <TaskBar>
        <TaskButton $width={51} aria-label="Start">
          <svg width="28" height="26" fill="#ffffff">
            <path d="M1 4l11-2v10H1zM13 2l14-2v12H13zM1 13h11v10L1 21zM13 13h14v12l-14-2z" />
          </svg>
        </TaskButton>
        <TaskButton $width={59} $open aria-label="File Explorer">
          <svg width="34" height="30">
            <path d="M3 2h8l2 3h17v20H3z" fill="#e4c468" />
            <path d="M5 3h5v3H5z" fill="#30a040" />
            <path d="M14 5h6v3h-6z" fill="#c84020" />
            <path d="M22 7h7v3h-7z" fill="#3a80c8" />
            <path d="M1 8h12l2 3h17v16H1z" fill="#f8e69a" stroke="#d8b850" />
            <path d="M5 29V20q0-2 3-2h18q3 0 3 2v9h-5v-6H10v6z" fill="#8cccec" stroke="#4a9cd0" />
          </svg>
        </TaskButton>
        <TaskButton $width={65} aria-label="Paint">
          <svg width="34" height="32">
            <path d="M2 20q0-12 15-14 12 0 12 9 0 12-13 13-4 0-4-4-10 3-10-4z" fill="#c8e0f4" stroke="#6c9cc4" />
            <circle cx="8" cy="17" r="3" fill="#e04030" />
            <circle cx="12" cy="12" r="2.500" fill="#40a840" />
            <circle cx="19" cy="10" r="3" fill="#f0b830" />
            <circle cx="15" cy="19" r="2.500" fill="#50708c" />
            <path d="M26 6l3 1-9 23-3 1z" fill="#e89030" />
            <path d="M24 3l4-2 5 1-3 6-4-1z" fill="#c49868" />
          </svg>
        </TaskButton>
        <TaskButton $width={62} aria-label="Monitor">
          <svg width="30" height="30">
            <rect x="1" y="1" width="28" height="28" rx="4" fill="#141414" stroke="#404040" />
            <path d="M2 5q0-3 3-3h20q3 0 3 3v11H2z" fill="#3c98c8" />
            <path d="M7 3h3v12H7zM12 8h4v7h-3zM19 11h3v3h-3zM7 18h4v9H9q-2-2-2-4zM13 18h3v9h-3zM18 18h4v5q0 2-2 4h-2z" fill="#ffffff" />
          </svg>
        </TaskButton>
        <TaskButton $width={59} $open aria-label="Notepad">
          <svg width="32" height="32">
            <path d="M10 3h19l1 24-9 2z" fill="#c8b080" />
            <path d="M9 3h17l-5 26-20-3z" fill="#8cd0dc" stroke="#d8f0f4" />
            <path d="M1 26l8-8 14 2-2 9z" fill="#4ca8b8" />
            <path d="M26 4l3 22-8 3z" fill="#e8f4f4" />
            <path d="M10 3h17" stroke="#888888" strokeWidth="3" strokeDasharray="1 1" />
          </svg>
        </TaskButton>
        <TaskButton $width={54} $active aria-label="CalMAN 5">
          <svg width="32" height="34">
            <path d="M4 1q12 2 25 20Q18 26 10 32 2 16 4 1z" fill="#140808" />
            <path d="M5 3q7 1 12 7l-7 5z" fill="#b82010" />
            <path d="M19 12l8 9-7 2z" fill="#a01424" />
            <path d="M7 15l3-3v14z" fill="#186020" />
            <path d="M12 12h9v3h-5v2q6 0 6 4t-6 4h-4v-3h4q2 0 2-1t-5-1z" fill="#111111" stroke="#f4f4e0" />
          </svg>
        </TaskButton>
        <Sliver />
        <Tray>
          {trayIcons.map((icon) => (
            <svg key={icon.key} width="16" height="16">{icon}</svg>
          ))}
        </Tray>
        <Clock>21:58<br />17.04.2014</Clock>
      </TaskBar>
    </Page>
  </>
);

export default App;
